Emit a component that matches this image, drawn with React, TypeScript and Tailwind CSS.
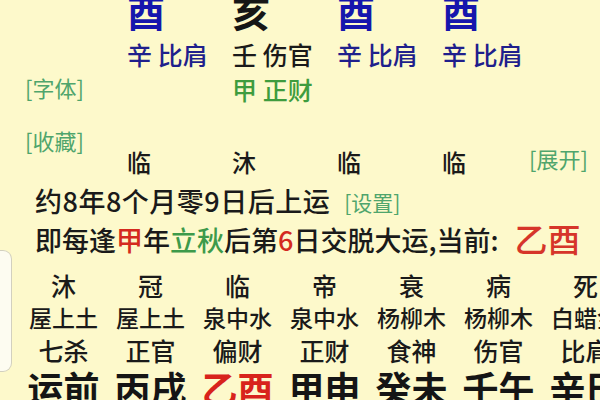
import React from "react";

const F = { fontFamily: '"Noto Sans CJK SC", "Noto Sans", sans-serif' };

const topCols = [
  { big: "酉", bigC: "text-[#1616ad]", sub: "辛 比肩", subC: "text-[#1f1f8c]" },
  { big: "亥", bigC: "text-[#161616]", sub: "壬 伤官", subC: "text-[#1a1a1a]" },
  { big: "酉", bigC: "text-[#1616ad]", sub: "辛 比肩", subC: "text-[#1f1f8c]" },
  { big: "酉", bigC: "text-[#1616ad]", sub: "辛 比肩", subC: "text-[#1f1f8c]" },
];

const stages = ["沐", "冠", "临", "帝", "衰", "病", "死"];
const nayin = ["屋上土", "屋上土", "泉中水", "泉中水", "杨柳木", "杨柳木", "白蜡金"];
const gods = ["七杀", "正官", "偏财", "正财", "食神", "伤官", "比肩"];
const pillars = [
  { t: "运前", c: "text-[#151515]" },
  { t: "丙戌", c: "text-[#151515]" },
  { t: "乙酉", c: "text-[#d8231c]" },
  { t: "甲申", c: "text-[#151515]" },
  { t: "癸未", c: "text-[#151515]" },
  { t: "壬午", c: "text-[#151515]" },
  { t: "辛巳", c: "text-[#151515]" },
];

export default function App() {
  return (
    <div
      style={F}
      className="relative w-[600px] h-[400px] overflow-hidden bg-[#fdf9cb] text-[#1a1a1a] font-medium"
    >
      {/* big branch row */}
      <div className="flex mt-[-8px] h-[38px] pl-[127px]">
        {topCols.map((c, i) => (
          <div key={i} className={`w-[105px] text-[38px] leading-[38px] font-bold ${c.bigC}`}>
            {c.big}
          </div>
        ))}
      </div>
      {/* hidden stems row */}
      <div className="flex h-[48px] items-center pl-[127px]">
        {topCols.map((c, i) => (
          <div key={i} className={`w-[105px] text-[25px] leading-[30px] whitespace-nowrap ${c.subC}`}>
            {c.sub}
          </div>
        ))}
      </div>
      {/* second hidden row + font label */}
      <div className="flex h-[24px] items-center">
        <div className="w-[127px] pl-[25px] text-[22px] leading-[24px] text-[#4fa56c] font-normal mt-[-7px]">[字体]</div>
        <div className="w-[105px]" />
        <div className="w-[105px] text-[25px] leading-[24px] whitespace-nowrap text-[#3e9c3e] mt-[-2px]">甲 正财</div>
      </div>
      {/* collect label + 临 row */}
      <div className="flex h-[76px]">
        <div className="w-[127px] pl-[25px] pt-[25px] text-[22px] leading-[26px] text-[#4fa56c] font-normal">[收藏]</div>
        {["临", "沐", "临"].map((t, i) => (
          <div key={i} className="w-[105px] pt-[47px] text-[24px] leading-[26px]">{t}</div>
        ))}
        <div className="w-[87px] pt-[47px] text-[24px] leading-[26px]">临</div>
        <div className="pt-[43px] text-[22px] leading-[26px] text-[#4fa56c] font-normal whitespace-nowrap">[展开]</div>
      </div>
      {/* start age row */}
      <div className="flex items-end h-[40px] pl-[35px] whitespace-nowrap">
        <span className="text-[27px] leading-[34px] tracking-[0.5px]">约8年8个月零9日后上运</span>
        <span className="ml-[14px] text-[21px] leading-[32px] text-[#4fa56c] font-normal">[设置]</span>
      </div>
      {/* transition row */}
      <div className="flex items-end h-[39px] pl-[35px] whitespace-nowrap">
        <span className="text-[27px] leading-[34px]">
          即每逢<span className="text-[#d42a1e]">甲</span>年<span className="text-[#3d9a4a]">立秋</span>后第
          <span className="text-[#d42a1e]">6</span>日交脱大运,当前:
        </span>
        <span className="ml-[16px] text-[33px] leading-[37px] text-[#d6352a]">乙酉</span>
      </div>
      {/* decade grid */}
      <div className="grid grid-cols-[repeat(7,87px)] pl-[20px] mt-[13px] whitespace-nowrap text-center">
        {stages.map((t, i) => (
          <div key={"s" + i} className="text-[25px] leading-[30px] h-[30px]">{t}</div>
        ))}
        {nayin.map((t, i) => (
          <div key={"n" + i} className="text-[23px] leading-[32px] h-[32px] mt-[1px]">{t}</div>
        ))}
        {gods.map((t, i) => (
          <div key={"g" + i} className="text-[25px] leading-[34px] h-[34px]">{t}</div>
        ))}
        {pillars.map((p, i) => (
          <div key={"p" + i} className={`text-[36px] leading-[40px] font-bold ${p.c}`}>{p.t}</div>
        ))}
      </div>
      {/* floating side handle */}
      <div className="absolute left-0 top-[250px] w-[12px] h-[122px] bg-[#fdfcf1] border border-l-0 border-[#d2d0bf] rounded-r-[9px]" />
    </div>
  );
}
